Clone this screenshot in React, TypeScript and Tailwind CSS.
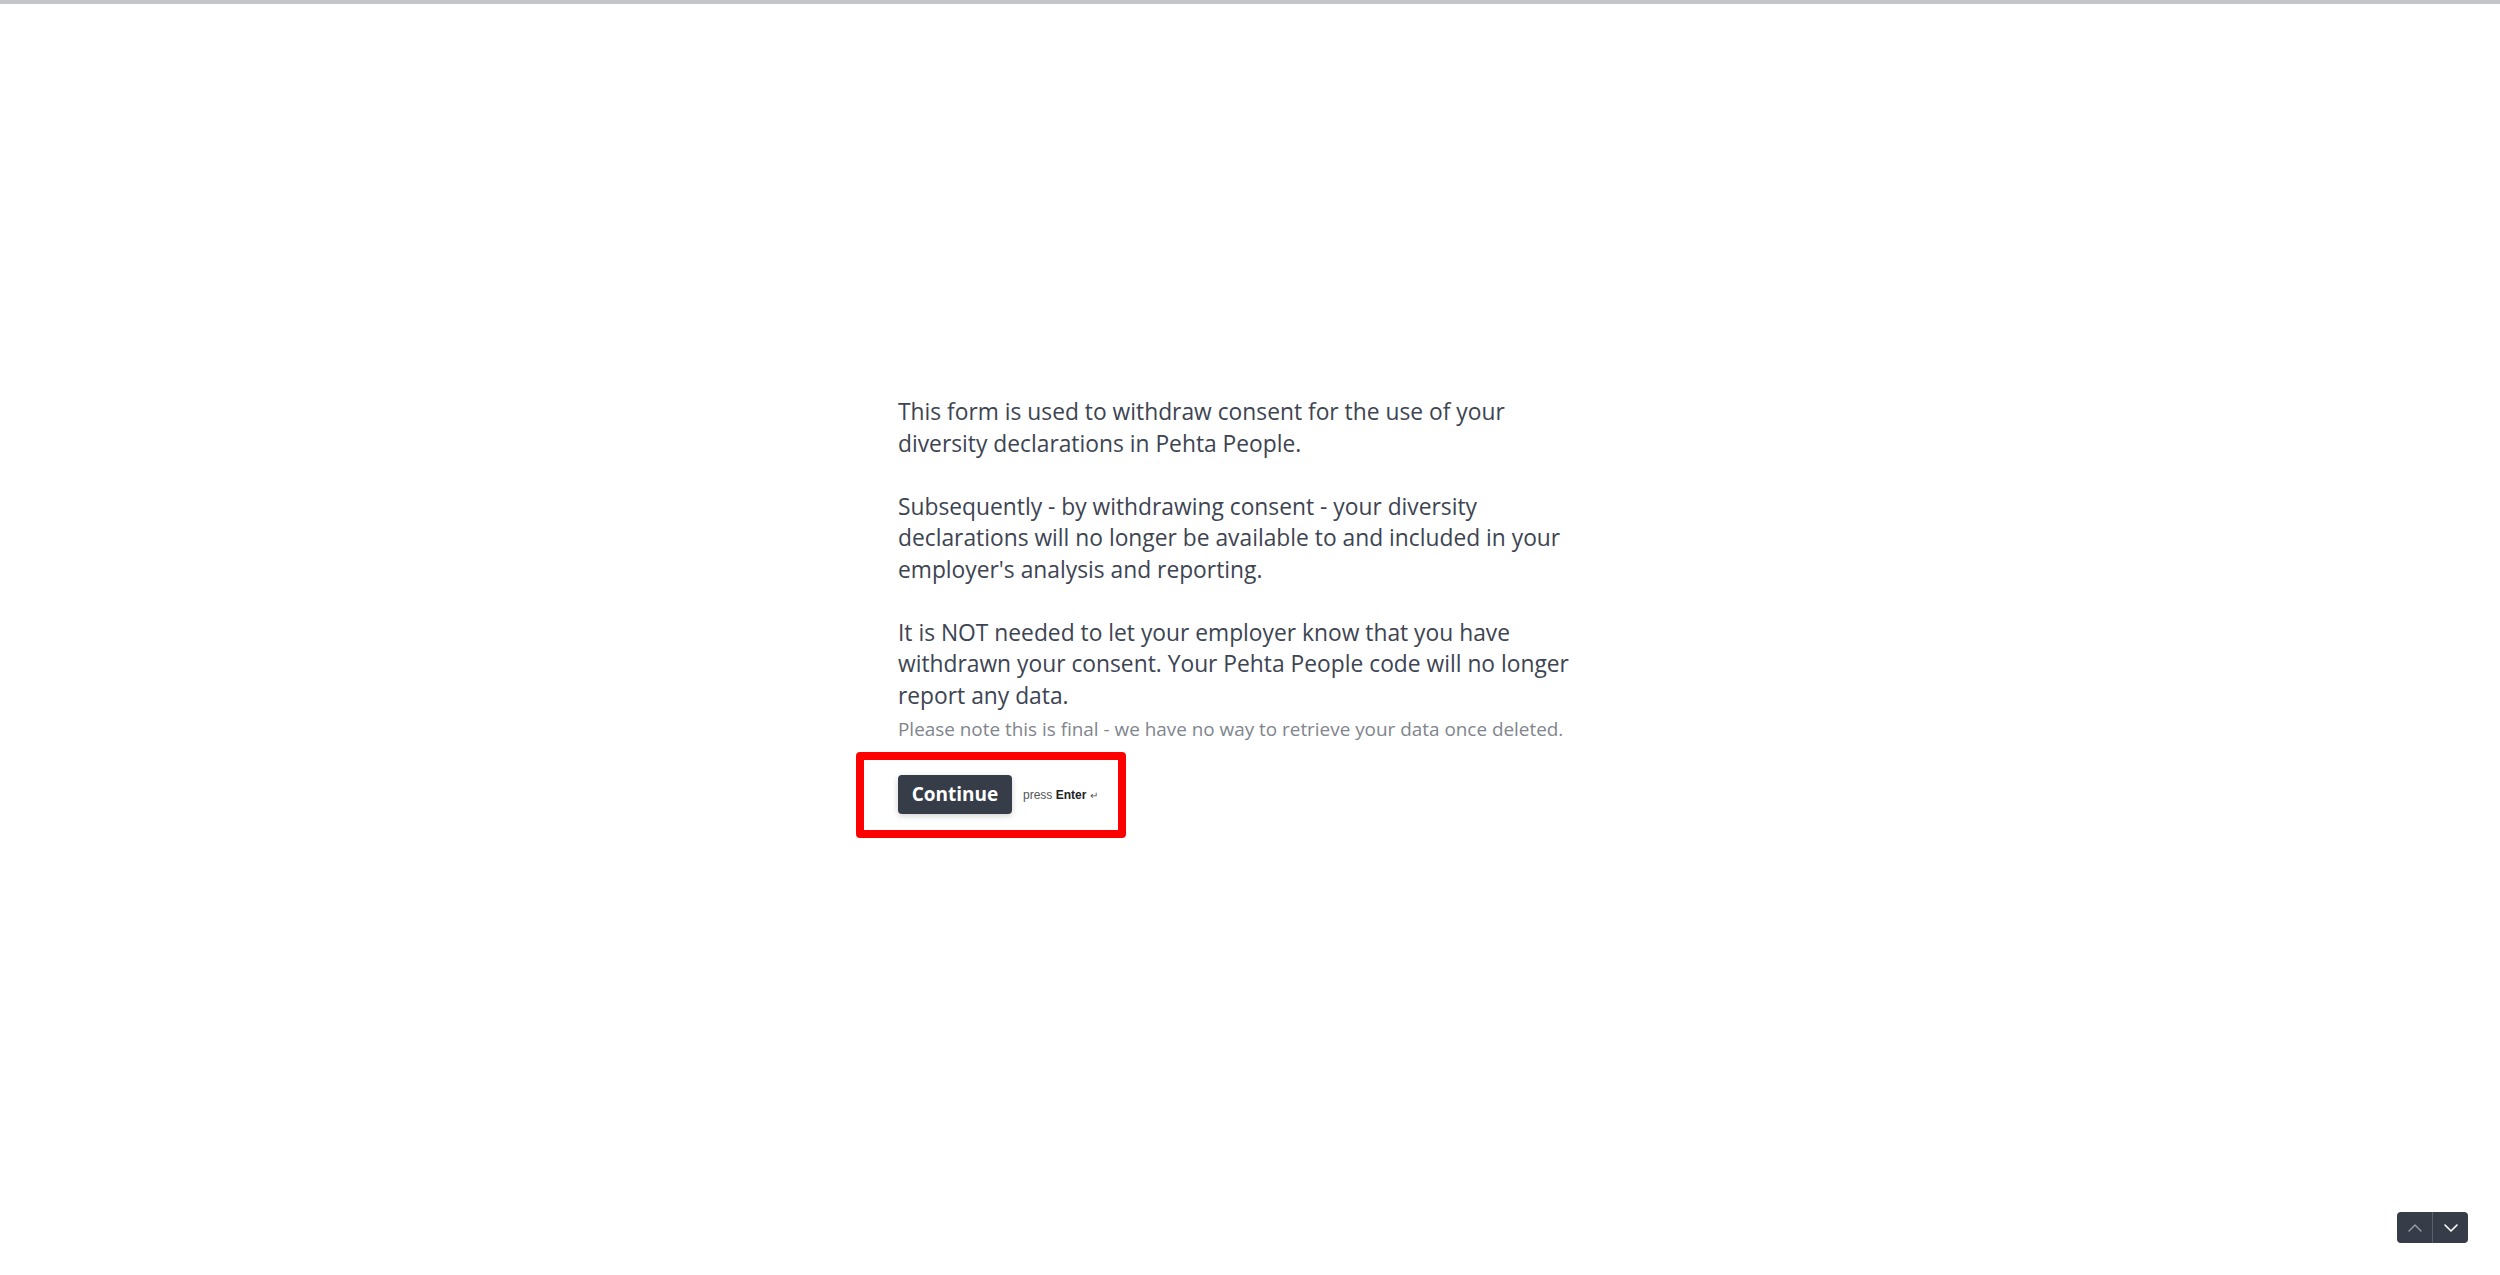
import { ChevronDown, ChevronUp } from "lucide-react";

const body = [
  ["This form is used to withdraw consent for the use of your", "diversity declarations in Pehta People."],
  [
    "Subsequently - by withdrawing consent - your diversity",
    "declarations will no longer be available to and included in your",
    "employer's analysis and reporting.",
  ],
  [
    "It is NOT needed to let your employer know that you have",
    "withdrawn your consent. Your Pehta People code will no longer",
    "report any data.",
  ],
];

export default function App() {
  return (
    <div className="min-h-[1275px] w-full bg-white flex flex-col font-['Open_Sans',sans-serif]">
      <div className="h-[4px] w-full bg-[#c4c5c8]" />

      <div className="flex-1 flex justify-center pt-[392px]">
        <div className="w-[704px]">
          <div className="flex flex-col gap-[31.5px] text-[22.8px] leading-[31.5px] text-[#3d4452]">
            {body.map((para, i) => (
              <p key={i}>
                {para.map((line, j) => (
                  <span key={j} className="block whitespace-nowrap">
                    {line}
                  </span>
                ))}
              </p>
            ))}
          </div>

          <p className="mt-[6px] text-[18.9px] leading-[24px] text-[#80858e] whitespace-nowrap">
            Please note this is final - we have no way to retrieve your data once deleted.
          </p>

          <div className="mt-[11px] -ml-[42px] inline-flex items-center border-[8px] border-[#ff0000] rounded-[4px] pl-[34px] pr-[20px] pt-[15px] pb-[16px]">
            <button className="h-[39px] w-[114px] rounded-[4px] bg-[#363d48] text-white text-[19px] font-bold shadow-[0_2px_6px_rgba(0,0,0,0.18)] font-['Open_Sans',sans-serif]">
              Continue
            </button>
            <span className="ml-[11px] text-[12px] text-[#555] font-['Liberation_Sans',Arial,sans-serif]">
              press <b className="text-[#222]">Enter</b> <span className="text-[10px]">↵</span>
            </span>
          </div>
        </div>
      </div>

      <div className="fixed right-[32px] bottom-[32px] flex h-[31px] rounded-[4px] bg-[#363d48] overflow-hidden">
        <button className="w-[36px] h-full flex items-center justify-center border-r border-[#5a616c]">
          <ChevronUp size={24} strokeWidth={1.4} className="text-[#9aa0a8]" />
        </button>
        <button className="w-[35px] h-full flex items-center justify-center">
          <ChevronDown size={24} strokeWidth={1.6} className="text-white" />
        </button>
      </div>
    </div>
  );
}
